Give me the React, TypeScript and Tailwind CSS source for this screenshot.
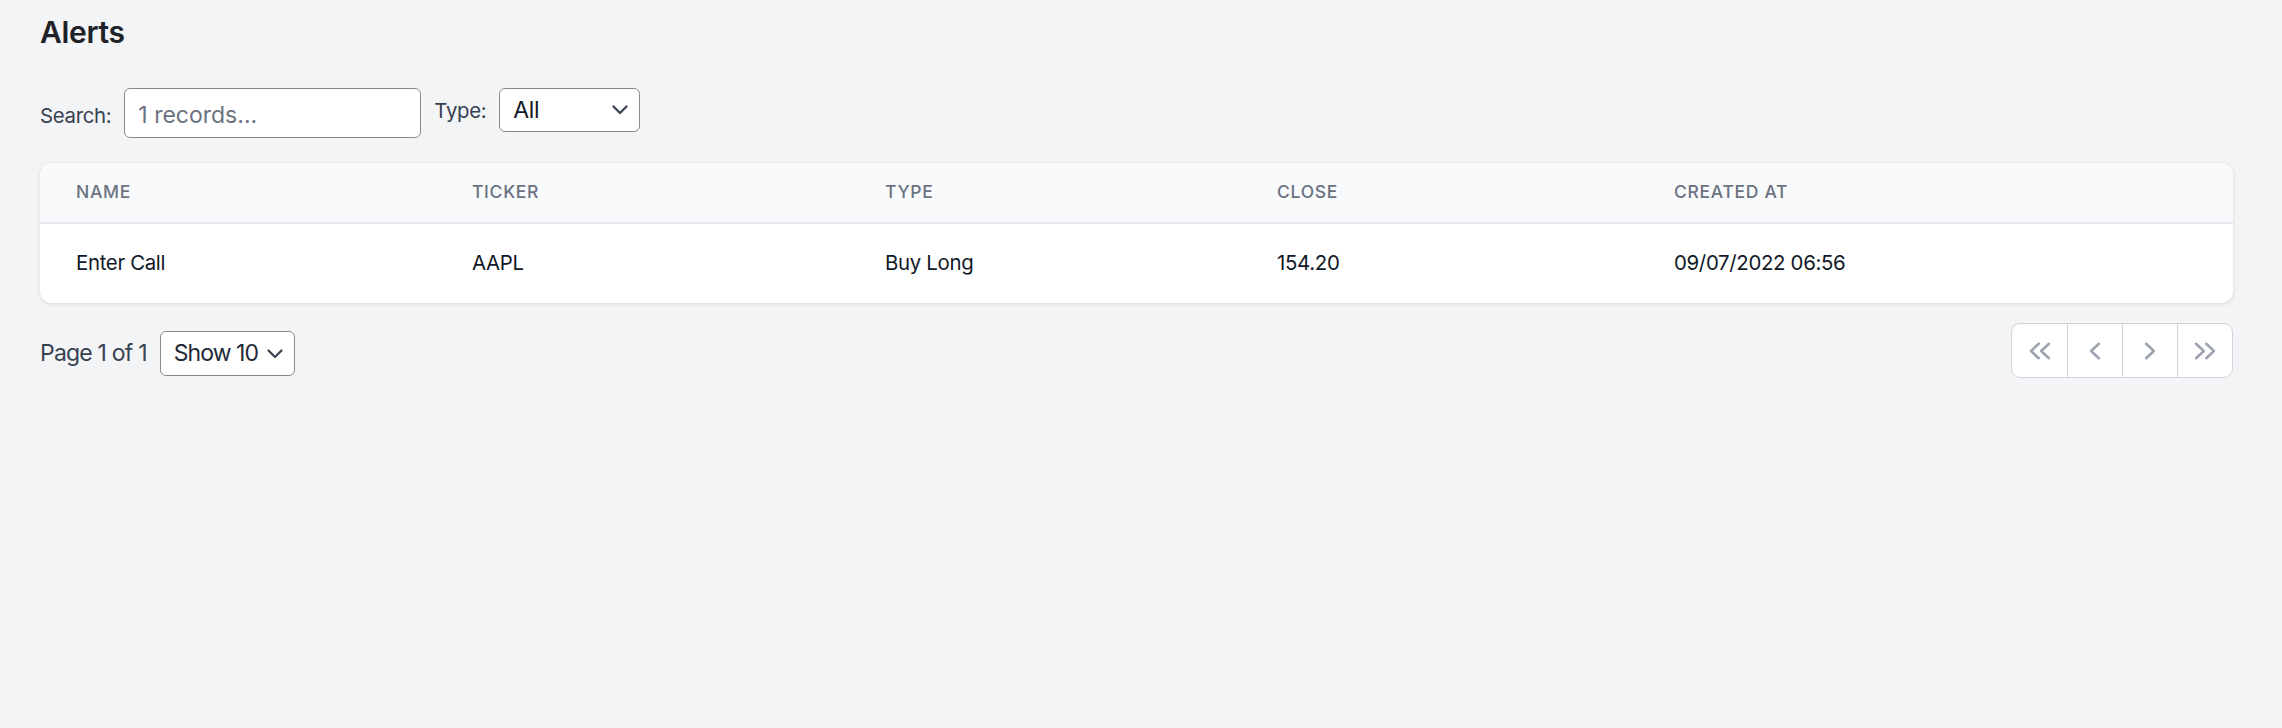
const alerts = [
  { name: "Enter Call", ticker: "AAPL", type: "Buy Long", close: "154.20", createdAt: "09/07/2022 06:56" },
];

const columns = ["Name", "Ticker", "Type", "Close", "Created At"];

const SelectChevron = () => (
  <svg
    width="16"
    height="10"
    viewBox="0 0 16 10"
    fill="none"
    className="pointer-events-none absolute right-[12px] top-1/2 -translate-y-1/2 text-[#374151]"
  >
    <path d="M1.5 1.5L8 8l6.5-6.5" stroke="currentColor" strokeWidth="2.2" strokeLinecap="round" strokeLinejoin="round" />
  </svg>
);

const pagerIcons = [
  "M15.79 14.77a.75.75 0 01-1.06.02l-4.5-4.25a.75.75 0 010-1.08l4.5-4.25a.75.75 0 111.04 1.08L11.832 10l3.938 3.71a.75.75 0 01.02 1.06zm-6 0a.75.75 0 01-1.06.02l-4.5-4.25a.75.75 0 010-1.08l4.5-4.25a.75.75 0 111.04 1.08L5.832 10l3.938 3.71a.75.75 0 01.02 1.06z",
  "M12.79 5.23a.75.75 0 01-.02 1.06L8.832 10l3.938 3.71a.75.75 0 11-1.04 1.08l-4.5-4.25a.75.75 0 010-1.08l4.5-4.25a.75.75 0 011.06.02z",
  "M7.21 14.77a.75.75 0 01.02-1.06L11.168 10 7.23 6.29a.75.75 0 111.04-1.08l4.5 4.25a.75.75 0 010 1.08l-4.5 4.25a.75.75 0 01-1.06-.02z",
  "M10.21 14.77a.75.75 0 01.02-1.06L14.168 10 10.23 6.29a.75.75 0 111.04-1.08l4.5 4.25a.75.75 0 010 1.08l-4.5 4.25a.75.75 0 01-1.06-.02zm-6 0a.75.75 0 01.02-1.06L8.168 10 4.23 6.29a.75.75 0 111.04-1.08l4.5 4.25a.75.75 0 010 1.08l-4.5 4.25a.75.75 0 01-1.06-.02z",
];

const App = () => {
  return (
    <div className="min-h-screen bg-[#f3f4f6] pl-[40px] pr-[49px] pt-[14px] font-[Inter,'Noto_Sans',sans-serif] tracking-[-0.02em]">
      <h1 className="text-[30px] leading-[36px] font-semibold text-[#1f2328]">Alerts</h1>

      {/* Filters */}
      <div className="mt-[38px] flex items-start gap-[13px]">
        <div className="flex items-baseline gap-[13px]">
          <label className="text-[20.4px] text-[#374151]">Search:</label>
          <input
            type="text"
            placeholder="1 records..."
            className="h-[50px] w-[297px] rounded-[6px] border border-[#878a8f] bg-white px-[13px] pt-[3px] text-[23px] tracking-normal text-[#111827] outline-none placeholder:text-[#6b7280]"
          />
        </div>
        <div className="flex items-baseline gap-[13px]">
          <label className="text-[20.4px] text-[#374151]">Type:</label>
          <div className="relative">
            <select className="h-[44px] w-[141px] appearance-none rounded-[6px] border border-[#878a8f] bg-white pl-[13px] text-[23px] text-[#111827] outline-none">
              <option>All</option>
              <option>Buy Long</option>
              <option>Sell Short</option>
            </select>
            <SelectChevron />
          </div>
        </div>
      </div>

      {/* Table */}
      <div className="mt-[25px] overflow-hidden rounded-[12px] bg-white shadow-[0_1px_4px_rgba(0,0,0,0.12)]">
        <div className="grid h-[61px] grid-cols-[396px_413px_392px_397px_1fr] items-center border-b-2 border-[#e5e7eb] bg-[#f9fafb]">
          {columns.map((col) => (
            <div key={col} className="pl-[36px] text-[17.5px] font-medium uppercase tracking-[0.04em] text-[#6b7280]">
              {col}
            </div>
          ))}
        </div>
        {alerts.map((a) => (
          <div key={a.name} className="grid h-[79px] grid-cols-[396px_413px_392px_397px_1fr] items-center text-[20.4px] text-[#111827]">
            <div className="pl-[36px]">{a.name}</div>
            <div className="pl-[36px]">{a.ticker}</div>
            <div className="pl-[36px]">{a.type}</div>
            <div className="pl-[36px]">{a.close}</div>
            <div className="pl-[36px]">{a.createdAt}</div>
          </div>
        ))}
      </div>

      {/* Pagination */}
      <div className="mt-[20px] flex items-start justify-between">
        <div className="mt-[8px] flex items-center gap-[13px]">
          <span className="text-[23px] tracking-[-0.035em] text-[#374151]">Page 1 of 1</span>
          <div className="relative">
            <select className="h-[45px] w-[135px] appearance-none rounded-[6px] border border-[#878a8f] bg-white pl-[13px] text-[23px] tracking-[-0.04em] text-[#1f2937] outline-none">
              <option>Show 10</option>
              <option>Show 20</option>
              <option>Show 50</option>
            </select>
            <SelectChevron />
          </div>
        </div>
        <div className="flex h-[55px] overflow-hidden rounded-[9px] border-[1.5px] border-[#d1d5db] bg-white">
          {pagerIcons.map((d, i) => (
            <button
              key={i}
              className={`flex w-[55px] items-center justify-center text-[#9ca3af] ${i > 0 ? "border-l-[1.5px] border-[#d1d5db]" : ""}`}
            >
              <svg width="34" height="34" viewBox="0 0 20 20" fill="currentColor">
                <path fillRule="evenodd" clipRule="evenodd" d={d} />
              </svg>
            </button>
          ))}
        </div>
      </div>
    </div>
  );
};

export default App;
